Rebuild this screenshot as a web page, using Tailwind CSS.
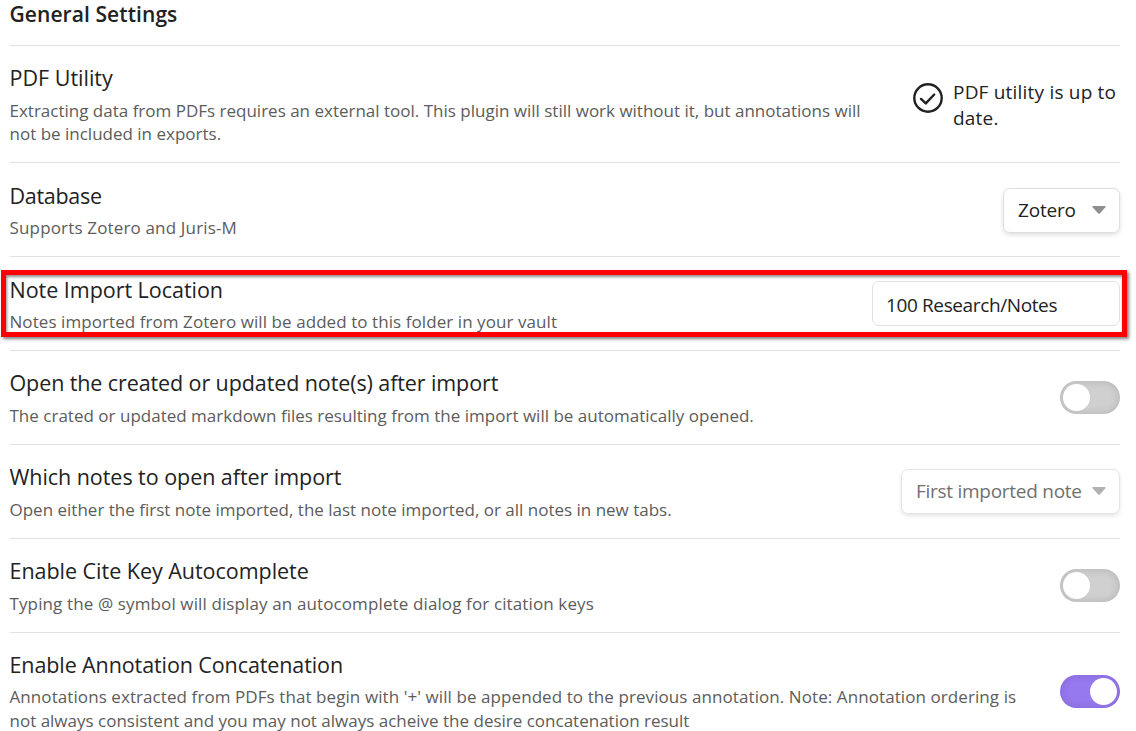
<!DOCTYPE html>
<html lang="en">
<head>
<meta charset="utf-8">
<title>General Settings</title>
<script src="https://cdn.jsdelivr.net/npm/@tailwindcss/browser@4"></script>
</head>
<body class="bg-white font-['Open_Sans','Noto_Sans',sans-serif] text-[#222222]">
<main class="relative h-[731px] w-[1136px] overflow-hidden pr-4 pl-[9.5px] whitespace-nowrap">
  <h1 class="h-[45px] text-[21px] leading-[28px] font-semibold tracking-[0.08px]">General Settings</h1>

  <section class="flex h-[117px] justify-between border-t border-[#e0e0e0] pt-[17px]">
    <div>
      <h2 class="text-[21.5px] leading-[30px]">PDF Utility</h2>
      <p class="mt-[6px] text-[17px] leading-[23px] text-[#5c5c5c]">Extracting data from PDFs requires an external tool. This plugin will still work without it, but annotations will<br>not be included in exports.</p>
    </div>
    <div class="flex w-[207px] gap-[10px] pt-[16px]">
      <svg class="mt-[4px] size-[30px] shrink-0" viewBox="0 0 30 30" fill="none" stroke="#222222" stroke-width="2.4" stroke-linecap="round" stroke-linejoin="round"><circle cx="15" cy="15" r="13.7"/><path d="M8 15.9l4.8 4.5 8.4-8.9"/></svg>
      <p class="text-[19px] leading-[26px] tracking-[0.2px]">PDF utility is up to<br>date.</p>
    </div>
  </section>

  <section class="flex h-[94px] justify-between border-t border-[#e0e0e0] pt-[18px]">
    <div>
      <h2 class="text-[21.5px] leading-[30px] tracking-[-0.3px]">Database</h2>
      <p class="mt-[5px] text-[17px] leading-[23px] tracking-[0.16px] text-[#5c5c5c]">Supports Zotero and Juris-M</p>
    </div>
    <div class="mt-[7px] flex h-[45px] w-[117px] items-center justify-between rounded-[7px] border border-[#dedede] pr-[13px] pb-px pl-[14px] shadow-[0_2px_4px_rgba(0,0,0,0.13)]">
      <span class="text-[19px] leading-[26px] tracking-[-0.2px]">Zotero</span>
      <svg class="h-[8px] w-[14px]" viewBox="0 0 14 8" fill="#8f8f8f"><path d="M1 0h12q1 .4.4 1.2L7.8 7.4q-.8.7-1.6 0L.6 1.2Q0 .4 1 0z"/></svg>
    </div>
  </section>

  <section class="flex h-[94px] justify-between border-t border-[#e0e0e0] pt-[18px]">
    <div>
      <h2 class="text-[21.5px] leading-[30px] tracking-[-0.03px]">Note Import Location</h2>
      <p class="mt-[5px] text-[17px] leading-[23px] tracking-[0.07px] text-[#5c5c5c]">Notes imported from Zotero will be added to this folder in your vault</p>
    </div>
    <div class="mt-[6px] flex h-[45px] w-[248px] items-center rounded-[7px] border border-[#e0e0e0] pt-[3px] pl-[13px] text-[19px] leading-[26px] tracking-[-0.38px]">100 Research/Notes</div>
  </section>

  <section class="flex h-[94px] justify-between border-t border-[#e0e0e0] pt-[17px]">
    <div>
      <h2 class="text-[21.5px] leading-[30px] tracking-[-0.1px]">Open the created or updated note(s) after import</h2>
      <p class="mt-[6px] text-[17px] leading-[23px] tracking-[0.01px] text-[#5c5c5c]">The crated or updated markdown files resulting from the import will be automatically opened.</p>
    </div>
    <div class="mt-[13px] h-[33px] w-[60px] rounded-full bg-[#d0d0d0] p-[3px] shadow-[inset_0_0_8px_rgba(0,0,0,0.15)]"><div class="size-[27px] rounded-full bg-white"></div></div>
  </section>

  <section class="flex h-[94px] justify-between border-t border-[#e0e0e0] pt-[17px]">
    <div>
      <h2 class="text-[21.5px] leading-[30px] tracking-[-0.05px]">Which notes to open after import</h2>
      <p class="mt-[6px] text-[17px] leading-[23px] text-[#5c5c5c]">Open either the first note imported, the last note imported, or all notes in new tabs.</p>
    </div>
    <div class="mt-[7px] flex h-[45px] w-[219px] items-center justify-between rounded-[7px] border border-[#e5e5e5] pr-[13px] pb-px pl-[14px] shadow-[0_2px_4px_rgba(0,0,0,0.1)]">
      <span class="text-[19px] leading-[26px] tracking-[-0.27px] text-[#707070]">First imported note</span>
      <svg class="h-[8px] w-[14px]" viewBox="0 0 14 8" fill="#b1b1b1"><path d="M1 0h12q1 .4.4 1.2L7.8 7.4q-.8.7-1.6 0L.6 1.2Q0 .4 1 0z"/></svg>
    </div>
  </section>

  <section class="flex h-[94px] justify-between border-t border-[#e0e0e0] pt-[17px]">
    <div>
      <h2 class="text-[21.5px] leading-[30px] tracking-[-0.03px]">Enable Cite Key Autocomplete</h2>
      <p class="mt-[6px] text-[17px] leading-[23px] tracking-[0.12px] text-[#5c5c5c]">Typing the @ symbol will display an autocomplete dialog for citation keys</p>
    </div>
    <div class="mt-[13px] h-[33px] w-[60px] rounded-full bg-[#d0d0d0] p-[3px] shadow-[inset_0_0_8px_rgba(0,0,0,0.15)]"><div class="size-[27px] rounded-full bg-white"></div></div>
  </section>

  <section class="flex h-[99px] justify-between border-t border-[#e0e0e0] pt-[17px]">
    <div>
      <h2 class="text-[21.5px] leading-[30px] tracking-[-0.1px]">Enable Annotation Concatenation</h2>
      <p class="mt-[5px] text-[17px] leading-[23.5px] text-[#5c5c5c]"><span class="tracking-[0.08px]">Annotations extracted from PDFs that begin with '+' will be appended to the previous annotation. Note: Annotation ordering is</span><br>not always consistent and you may not always acheive the desire concatenation result</p>
    </div>
    <div class="mt-[25px] flex h-[33px] w-[60px] justify-end rounded-full bg-[#9678ef] p-[3px] shadow-[inset_0_0_8px_rgba(0,0,0,0.13)]"><div class="size-[27px] rounded-full bg-white"></div></div>
  </section>

  <div class="absolute top-[270px] left-px h-[67px] w-[1126px] border-5 border-[#ff0000] shadow-[2px_2px_3px_rgba(0,0,0,0.5),inset_1px_2px_3px_rgba(0,0,0,0.45)]"></div>
</main>
</body>
</html>
